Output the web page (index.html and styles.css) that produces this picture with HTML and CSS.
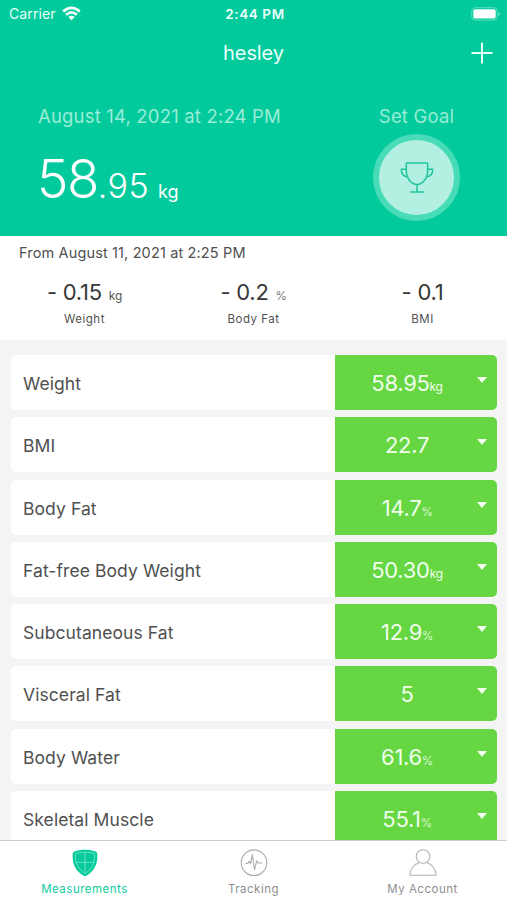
FILE: index.html
```html
<!DOCTYPE html>
<html lang="en">
<head>
<meta charset="utf-8">
<title>Measurements</title>
<link rel="stylesheet" href="styles.css">
</head>
<body>
<div class="app">
  <header class="hero">
    <div class="status">
      <div class="carrier"><span>Carrier</span>
        <svg class="wifi" width="19" height="15" viewBox="0 0 19 15" fill="none" stroke="#fff" stroke-width="2.5"><path d="M1.2 5.5Q9.5-1.8 17.8 5.5"/><path d="M4.1 8.7Q9.5 4 14.9 8.7"/><path d="M9.5 14.3 6.3 11.1Q9.5 8.6 12.7 11.1Z" fill="#fff" stroke="none"/></svg>
      </div>
      <div class="clock">2:44 PM</div>
      <svg class="battery" width="30" height="14" viewBox="0 0 30 14"><rect x=".7" y=".7" width="25.6" height="12.4" rx="3.6" fill="none" stroke="#5fe0c0" stroke-width="1"/><rect x="2.3" y="2.2" width="22.4" height="9.4" rx="2.2" fill="#fff"/><path d="M27.6 5v4q1.4-.6 1.4-2t-1.4-2Z" fill="#5fe0c0"/></svg>
    </div>
    <div class="titlebar">
      <h1>hesley</h1>
      <svg class="plus" width="22" height="22" viewBox="0 0 22 22" stroke="#e4fff8" stroke-width="2"><path d="M11 .5v21M.5 11h21"/></svg>
    </div>
    <div class="summary">
      <div class="reading">
        <div class="date">August 14, 2021 at 2:24 PM</div>
        <div class="big"><span class="int">58</span><span class="dec">.95</span><span class="kg">kg</span></div>
      </div>
      <div class="goal">
        <div class="goal-label">Set Goal</div>
        <div class="ring">
          <svg width="34" height="34" viewBox="0 0 34 34" fill="none" stroke="#1fc59c" stroke-width="1.5" stroke-linecap="round" stroke-linejoin="round"><path d="M6.300 2h21.400v7.500c0 8-5.400 14-10.700 14S6.300 17.500 6.300 9.500Z"/><path d="M6.300 8.300H1.300c0 4.500 2 7.500 6.300 7.500M27.700 8.300h5c0 4.500-2 7.500-6.300 7.500M17 23.500v7.300M10.700 30.900h12.600"/></svg>
        </div>
      </div>
    </div>
  </header>
  <section class="compare">
    <div class="from">From August 11, 2021 at 2:25 PM</div>
    <div class="deltas">
      <div class="delta"><div class="amount">- 0.15 <small>kg</small></div><div class="name">Weight</div></div>
      <div class="delta"><div class="amount">- 0.2 <small class="pct">%</small></div><div class="name">Body Fat</div></div>
      <div class="delta"><div class="amount">- 0.1</div><div class="name">BMI</div></div>
    </div>
  </section>
  <main class="list">
    <div class="row"><div class="label">Weight</div><div class="value"><span>58.95<small>kg</small></span><i class="caret"></i></div></div>
    <div class="row"><div class="label">BMI</div><div class="value"><span>22.7</span><i class="caret"></i></div></div>
    <div class="row"><div class="label">Body Fat</div><div class="value"><span>14.7<small class="pct">%</small></span><i class="caret"></i></div></div>
    <div class="row"><div class="label">Fat-free Body Weight</div><div class="value"><span>50.30<small>kg</small></span><i class="caret"></i></div></div>
    <div class="row"><div class="label">Subcutaneous Fat</div><div class="value"><span>12.9<small class="pct">%</small></span><i class="caret"></i></div></div>
    <div class="row"><div class="label">Visceral Fat</div><div class="value"><span>5</span><i class="caret"></i></div></div>
    <div class="row"><div class="label">Body Water</div><div class="value"><span>61.6<small class="pct">%</small></span><i class="caret"></i></div></div>
    <div class="row"><div class="label">Skeletal Muscle</div><div class="value"><span>55.1<small class="pct">%</small></span><i class="caret"></i></div></div>
  </main>
  <nav class="tabs">
    <div class="tab active">
      <svg width="28" height="28" viewBox="0 0 28 28"><path d="M14 .8c4 0 7.500.5 10.500 1.700q1.700.7 1.800 2.500c.8 9.500-3 17.500-11 21.700q-1.300.6-2.600 0C4.700 22.500.9 14.500 1.700 5q.1-1.800 1.800-2.500C6.500 1.300 10 .8 14 .8Z" fill="#07ca9c"/><path d="M14 3.200c3.500 0 6.500.4 9.500 1.500.8 8.500-2.200 15.300-9.500 19.600C6.700 20 3.700 13.200 4.500 4.700 7.500 3.600 10.500 3.200 14 3.200ZM14 3v21.500M4.500 13.300h19" fill="none" stroke="#7ce8cc" stroke-width=".8"/></svg>
      <span>Measurements</span>
    </div>
    <div class="tab">
      <svg width="28" height="28" viewBox="0 0 28 28" fill="none" stroke="#adadad" stroke-width="1.100" stroke-linejoin="round"><circle cx="14" cy="13.700" r="12.800"/><path d="M5.500 14.500h2.200l1.600-2.500 1.300 2.800 1.700-9.300 2.200 15.300 2.200-9 1.600 2.200h3.900"/></svg>
      <span>Tracking</span>
    </div>
    <div class="tab">
      <svg width="28" height="28" viewBox="0 0 28 28" fill="none" stroke="#b3b3b3" stroke-width="1.100" stroke-linejoin="round"><circle cx="14" cy="7.500" r="6.800"/><path d="M10.300 13.400C5 15.300 1.300 19.500.8 26.300h26.400c-.5-6.800-4.200-11-9.500-12.900"/></svg>
      <span>My Account</span>
    </div>
  </nav>
</div>
</body>
</html>
```
FILE: styles.css
```css
* { box-sizing: border-box; }
body { margin: 0; font-family: Inter, "Liberation Sans", sans-serif; color: #505050; }
svg { display: block; }
.app { width: 507px; height: 900px; display: flex; flex-direction: column; background: #f4f4f4; overflow: hidden; }

.hero { flex: none; height: 236px; background: #02ca9d; color: #e9fff9; }
.status { display: grid; grid-template-columns: 1fr auto 1fr; align-items: center; height: 27px; padding: 0 6px 0 9px; }
.carrier { display: flex; align-items: center; gap: 6px; font-size: 14px; letter-spacing: 0.1px; }
.clock { font-size: 13.500px; font-weight: 600; letter-spacing: 0.6px; }
.battery { justify-self: end; }
.titlebar { display: grid; grid-template-columns: 1fr auto 1fr; align-items: center; height: 50px; padding: 1px 14px 0; }
h1 { grid-column: 2; margin: 0; padding-top: 1px; font-size: 20px; font-weight: 400; line-height: 24px; letter-spacing: -0.1px; }
.plus { justify-self: end; }
.summary { display: flex; justify-content: space-between; padding: 27px 47px 0 38px; }
.date, .goal-label { font-size: 18.500px; line-height: 24px; font-weight: 400; letter-spacing: 0.18px; color: #98edd6; white-space: nowrap; }
.big { display: flex; align-items: baseline; margin-top: 19px; line-height: 64px; color: #fff; }
.int { font-size: 53px; font-weight: 350; letter-spacing: -1.500px; margin-left: -1px; }
.dec { font-size: 34px; font-weight: 350; letter-spacing: 0.4px; }
.kg { font-size: 18px; margin-left: 9px; }
.goal { display: flex; flex-direction: column; align-items: center; }
.ring { display: grid; place-items: center; width: 87px; height: 87px; margin-top: 6px; border: 6px solid #48dbb8; border-radius: 50%; background: #b4f0e1; }

.compare { flex: none; height: 104px; padding-top: 7px; background: #fff; }
.from { padding-left: 19px; font-size: 14.500px; line-height: 20px; letter-spacing: 0.14px; }
.deltas { display: grid; grid-template-columns: repeat(3, 1fr); text-align: center; margin-top: 15px; }
.amount { height: 28px; font-size: 22px; line-height: 28px; letter-spacing: -0.25px; color: #383838; }
.amount small { font-size: 12px; margin-left: 1px; color: #555; }
.name { font-size: 11.500px; line-height: 16px; margin-top: 5px; letter-spacing: 0.5px; }

.list { flex: 1; min-height: 0; display: flex; flex-direction: column; gap: 7.300px; padding: 15px 10px 0 11px; overflow: hidden; }
.row { flex: none; display: flex; height: 55px; border-radius: 5px; overflow: hidden; background: #fff; }
.label { flex: 1; padding-left: 12px; font-size: 17.500px; line-height: 57px; letter-spacing: 0.08px; }
.value { display: grid; grid-template-columns: 1fr; position: relative; width: 162px; padding-right: 18px; background: #66d642; color: #f0ffec; font-size: 22px; line-height: 56px; letter-spacing: -0.3px; text-align: center; }
.value small { font-size: 12px; }
.caret { position: absolute; right: 10px; top: 22px; border: 5.500px solid transparent; border-top: 6px solid #f4fff1; border-bottom: 0; }
.amount .pct, .value .pct { font-weight: 300; }

.tabs { flex: none; display: grid; grid-template-columns: repeat(3, 1fr); height: 60px; border-top: 1px solid #cfcfcf; background: #fff; }
.tab { display: flex; flex-direction: column; align-items: center; padding-top: 8px; color: #8e8e8e; font-size: 11.500px; line-height: 16px; letter-spacing: 0.5px; }
.tab span { margin-top: 4px; }
.active { color: #10cba0; }
```
